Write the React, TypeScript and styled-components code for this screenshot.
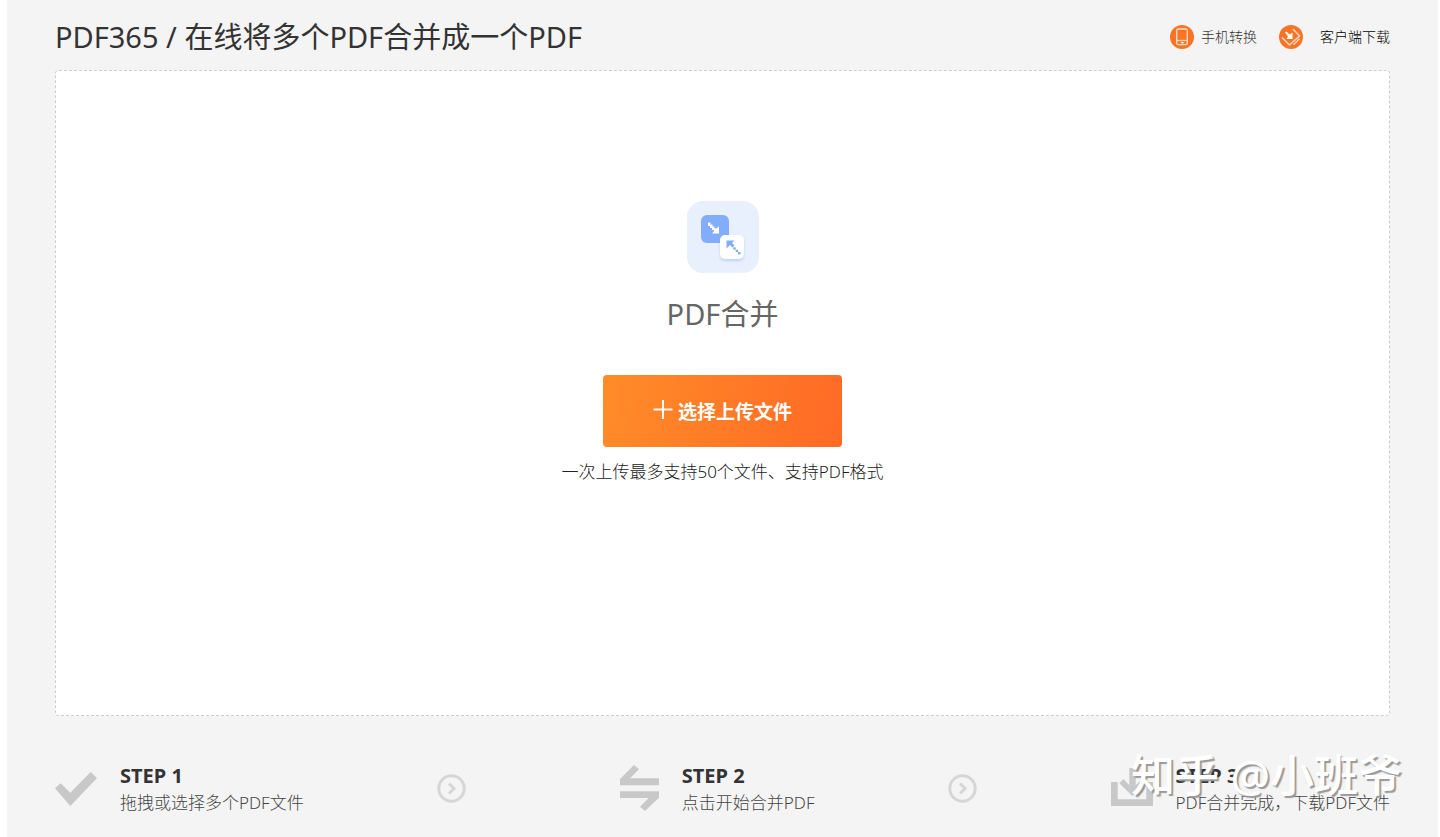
import React from "react";
import styled, { createGlobalStyle } from "styled-components";

const GlobalStyle = createGlobalStyle`
  *, *::before, *::after { box-sizing: border-box; }
  body {
    margin: 0;
    background: #fff;
    color: #333;
    font-family: "Noto Sans", "Noto Sans CJK SC", sans-serif;
  }
  h1, h2, h3, p, ol { margin: 0; padding: 0; font-weight: 400; }
`;

const Page = styled.div`
  position: relative;
  display: flex;
  flex-direction: column;
  min-height: 100vh;
  margin: 0 2px 0 7px;
  padding: 0 48px;
  background: #f4f4f4;
`;

const Header = styled.header`
  display: flex;
  align-items: center;
  justify-content: space-between;
  height: 70px;
  padding-top: 4px;
`;

const PageTitle = styled.h1`
  font-size: 29px;
  line-height: 40px;
`;

const HeaderLinks = styled.nav`
  display: flex;
  align-items: center;
  gap: 22px;
`;

const HeaderLink = styled.a<{ $gap: number; $color: string }>`
  display: flex;
  align-items: center;
  gap: ${(p) => p.$gap}px;
  color: ${(p) => p.$color};
  font-size: 14px;
  font-weight: 300;
  line-height: 24px;
  text-decoration: none;
`;

const DropZone = styled.main`
  display: flex;
  flex-direction: column;
  align-items: center;
  min-height: 646px;
  padding: 130px 24px 24px;
  background: #fff;
  border: 1px dashed #ccc;
  border-radius: 4px;
`;

const ToolName = styled.h2`
  margin-top: 19px;
  color: #666;
  font-size: 29px;
  line-height: 44px;
`;

const UploadButton = styled.button`
  display: flex;
  align-items: center;
  justify-content: center;
  gap: 5px;
  width: 239px;
  height: 72px;
  margin-top: 39px;
  padding: 2px 0 0;
  border: 0;
  border-radius: 4px;
  background: linear-gradient(100deg, #ff8c28, #ff6a25);
  color: #fff;
  font-family: inherit;
  font-size: 19px;
  font-weight: 700;
  line-height: 28px;
  cursor: pointer;
`;

const Hint = styled.p`
  margin-top: 12px;
  color: #222;
  font-size: 17px;
  font-weight: 300;
  line-height: 26px;
`;

const Steps = styled.ol`
  display: flex;
  align-items: center;
  justify-content: space-between;
  padding: 46px 0 20px;
  list-style: none;
`;

const Step = styled.li<{ $indent?: boolean }>`
  display: flex;
  align-items: center;
  gap: 23px;
  padding-left: ${(p) => (p.$indent ? 20 : 0)}px;
`;

const Separator = styled.li`
  display: flex;
`;

const StepTitle = styled.h3`
  font-size: 20px;
  font-weight: 700;
  line-height: 28px;
`;

const StepText = styled.p`
  color: #444;
  font-size: 17px;
  font-weight: 300;
  line-height: 26px;
`;

const Watermark = styled.div`
  position: absolute;
  right: 36px;
  bottom: 34px;
  color: #fff;
  font-size: 44px;
  font-weight: 500;
  line-height: 56px;
  text-shadow: 2px 2px 1px #999;
  pointer-events: none;
`;

const PhoneIcon = () => (
  <svg width="24" height="24" viewBox="0 0 24 24" fill="none" aria-hidden="true">
    <circle cx="12" cy="12" r="12" fill="#fb7327" />
    <rect x="6.7" y="4" width="10.600" height="15.600" rx="1.600" stroke="#ffd9b8" strokeWidth="1.400" />
    <path d="M7 15.500h10.500" stroke="#ffd9b8" strokeWidth="1.300" />
    <path d="M11 17.600h2.600" stroke="#fff" strokeWidth="1.300" />
  </svg>
);

const ClientIcon = () => (
  <svg width="24" height="24" viewBox="0 0 24 24" fill="none" aria-hidden="true">
    <circle cx="12" cy="12" r="12" fill="#fb7327" />
    <path d="M3 12.500 10.500 20 20.500 11 14 4" stroke="#ffd9b8" strokeWidth="1.500" />
    <path d="M14.500 19.800l6-6" stroke="#ffd9b8" strokeWidth="1.500" />
    <path d="M6 7.500 7.500 6.500 9.500 8.500 11 9.500 13.500 7.500V14H7.500L9 11.500 7.500 9.500z" fill="#fff" />
  </svg>
);

const MergeIcon = () => (
  <svg width="72" height="72" viewBox="0 0 72 72" aria-hidden="true">
    <defs>
      <filter id="tileShadow" x="-40%" y="-40%" width="180%" height="200%">
        <feDropShadow dx="0" dy="2" stdDeviation="1.500" floodColor="#7da4e8" floodOpacity="0.4" />
      </filter>
    </defs>
    <rect width="72" height="72" rx="16" fill="#e8f0fe" />
    <rect x="14" y="14" width="28" height="28" rx="6" fill="#82adfb" />
    <rect x="33" y="34" width="24" height="24" rx="5" fill="#fff" filter="url(#tileShadow)" />
    <path d="M21 21.500h2.500v2h2v2h2v2h1.500l3-2v7h-7l2-2.500v-1h-2v-2h-2v-2h-2z" fill="#fff" />
    <path d="M39.500 39.500h8l-2.500 2.500 2.500 2.500-2 2-2.500-2.500-3.500 3.500z" fill="#82adfb" />
    <path d="M46.300 46.300h2.400v2.400h-2.400zM48.700 48.700h2.400v2.400h-2.400zM51.100 51.100h2.400v2.400h-2.400z" fill="#82adfb" />
  </svg>
);

const PlusIcon = () => (
  <svg width="20" height="24" viewBox="0 0 20 24" aria-hidden="true">
    <path d="M10 0v19M.5 9.500h19" stroke="#fff" strokeWidth="2" />
  </svg>
);

const CheckIcon = () => (
  <svg width="42" height="34" viewBox="0 0 126 102" aria-hidden="true">
    <path d="M0 49 17 34l29 28L107 0l19 18-80 84z" fill="#c8c8c8" />
  </svg>
);

const SwapIcon = () => (
  <svg width="39" height="48" viewBox="0 0 117 144" aria-hidden="true">
    <path d="M0 61V42L42 0l15 13-27 27h87v21zM0 79h117v19l-42 40-15-13 26-26H0z" fill="#c8c8c8" />
  </svg>
);

const DownloadIcon = () => (
  <svg width="42" height="42" viewBox="0 0 126 126" aria-hidden="true">
    <path
      d="M0 42h20v52h86V42h20v72H0zM55 0h19v52l20-19 12 13-42 38-39-38 12-13 18 19z"
      fill="#c8c8c8"
    />
  </svg>
);

const NextIcon = () => (
  <svg width="29" height="31" viewBox="0 0 29 31" fill="none" stroke="#d6d6d6" aria-hidden="true">
    <circle cx="14.500" cy="14.500" r="12.700" strokeWidth="3" />
    <path d="m12 9.500 5 5-5 5" strokeWidth="3" />
  </svg>
);

export default function App() {
  return (
    <>
      <GlobalStyle />
      <Page>
        <Header>
          <PageTitle>PDF365 / 在线将多个PDF合并成一个PDF</PageTitle>
          <HeaderLinks>
            <HeaderLink href="#mobile" $gap={7} $color="#333">
              <PhoneIcon />
              手机转换
            </HeaderLink>
            <HeaderLink href="#client" $gap={17} $color="#000">
              <ClientIcon />
              客户端下载
            </HeaderLink>
          </HeaderLinks>
        </Header>

        <DropZone>
          <MergeIcon />
          <ToolName>PDF合并</ToolName>
          <UploadButton type="button">
            <PlusIcon />
            选择上传文件
          </UploadButton>
          <Hint>一次上传最多支持50个文件、支持PDF格式</Hint>
        </DropZone>

        <Steps>
          <Step>
            <CheckIcon />
            <div>
              <StepTitle>STEP 1</StepTitle>
              <StepText>拖拽或选择多个PDF文件</StepText>
            </div>
          </Step>
          <Separator>
            <NextIcon />
          </Separator>
          <Step $indent>
            <SwapIcon />
            <div>
              <StepTitle>STEP 2</StepTitle>
              <StepText>点击开始合并PDF</StepText>
            </div>
          </Step>
          <Separator>
            <NextIcon />
          </Separator>
          <Step>
            <DownloadIcon />
            <div>
              <StepTitle>STEP 3</StepTitle>
              <StepText>PDF合并完成，下载PDF文件</StepText>
            </div>
          </Step>
        </Steps>
        <Watermark>知乎 @小班爷</Watermark>
      </Page>
    </>
  );
}
